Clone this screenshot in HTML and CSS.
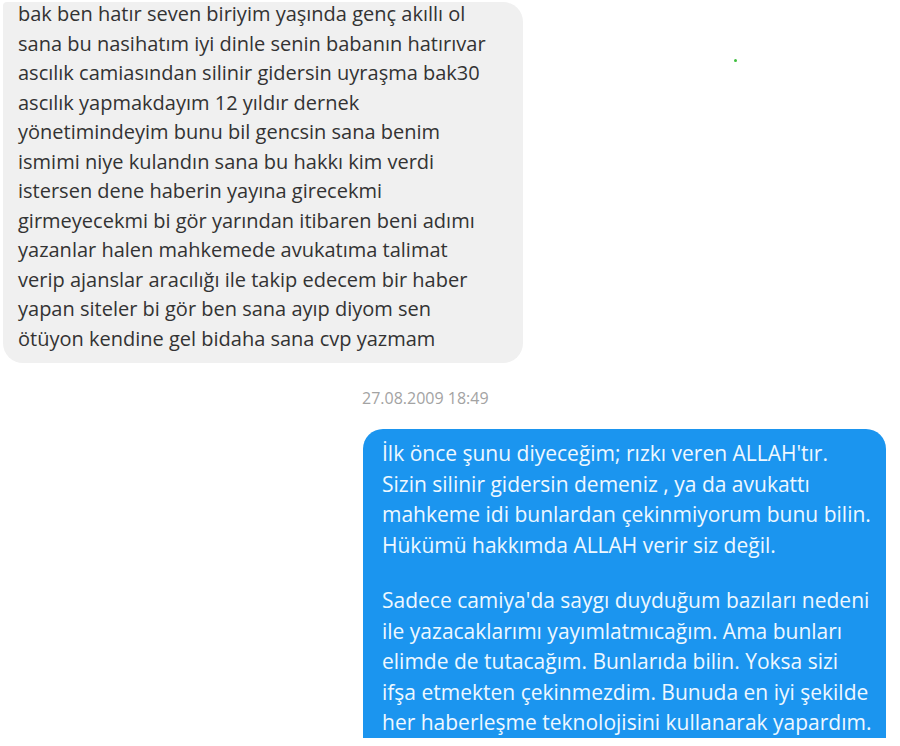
FILE: index.html
```html
<!DOCTYPE html>
<html lang="tr">
<head>
<meta charset="utf-8">
<link rel="stylesheet" href="styles.css">
</head>
<body>
<div class="chat">
  <div class="row row-in">
    <div class="bubble bubble-in"><p>bak ben hatır seven biriyim yaşında genç akıllı ol<br>sana bu nasihatım iyi dinle senin babanın hatırıvar<br>ascılık camiasından silinir gidersin uyraşma bak30<br>ascılık yapmakdayım 12 yıldır dernek<br>yönetimindeyim bunu bil gencsin sana benim<br>ismimi niye kulandın sana bu hakkı kim verdi<br>istersen dene haberin yayına girecekmi<br>girmeyecekmi bi gör yarından itibaren beni adımı<br>yazanlar halen mahkemede avukatıma talimat<br>verip ajanslar aracılığı ile takip edecem bir haber<br>yapan siteler bi gör ben sana ayıp diyom sen<br>ötüyon kendine gel bidaha sana cvp yazmam</p></div>
  </div>
  <div class="time">27.08.2009 18:49</div>
  <div class="row row-out">
    <div class="bubble bubble-out">
      <p>İlk önce şunu diyeceğim; rızkı veren ALLAH'tır.<br>Sizin silinir gidersin demeniz , ya da avukattı<br>mahkeme idi bunlardan çekinmiyorum bunu bilin.<br>Hükümü hakkımda ALLAH verir siz değil.</p>
      <p>Sadece camiya'da saygı duyduğum bazıları nedeni<br>ile yazacaklarımı yayımlatmıcağım. Ama bunları<br>elimde de tutacağım. Bunlarıda bilin. Yoksa sizi<br>ifşa etmekten çekinmezdim. Bunuda en iyi şekilde<br>her haberleşme teknolojisini kullanarak yapardım.</p>
    </div>
  </div>
</div>
<span class="dot"></span>
</body>
</html>
```

FILE: styles.css
```css
html, body {
  margin: 0;
  padding: 0;
  background: #ffffff;
}
body {
  width: 900px;
  height: 746px;
  overflow: hidden;
  position: relative;
  font-family: "Open Sans", "Noto Sans", sans-serif;
}
.chat {
  display: flex;
  flex-direction: column;
  padding-top: 2px;
}
.row {
  display: flex;
}
.row-in {
  padding-left: 3px;
}
.row-out {
  justify-content: flex-end;
  padding-right: 14px;
}
.bubble {
  box-sizing: border-box;
}
.bubble p {
  margin: 0;
}
.bubble-in {
  width: 520px;
  background: #f0f0f0;
  color: #333333;
  font-size: 20px;
  line-height: 29.5px;
  padding: 0 0 10px 15px;
  border-radius: 4px 20px 20px 20px;
  letter-spacing: 0;
}
.bubble-in p {
  margin-top: -3px;
}
.time {
  margin-top: 25px;
  padding-left: 362px;
  font-size: 16px;
  color: #a3a3a3;
  line-height: 20px;
}
.bubble-out {
  margin-top: 21px;
  width: 523px;
  height: 309px;
  overflow: hidden;
  background: #1b95ef;
  color: #eef8ff;
  font-size: 21px;
  line-height: 30.5px;
  padding: 9px 4px 0 19px;
  border-radius: 20px 20px 0 0;
  letter-spacing: 0;
}
.bubble-out p + p {
  margin-top: 25px;
}
.dot {
  position: absolute;
  left: 734px;
  top: 59px;
  width: 3px;
  height: 3px;
  background: #3fbf3f;
  border-radius: 50%;
}
```
